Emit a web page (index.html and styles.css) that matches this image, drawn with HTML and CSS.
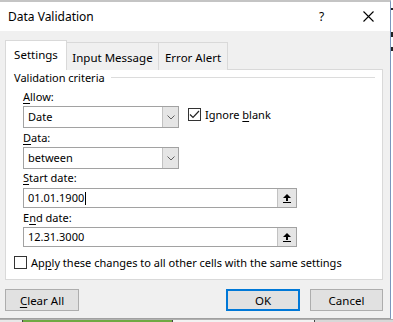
FILE: index.html
```html
<!DOCTYPE html>
<html>
<head>
	<meta charset="utf-8">
	<title>Data Validation</title>
	<link rel="stylesheet" href="styles.css">
</head>
<body>
<div class="screen">
  <div class="dialog">
    <div class="titlebar">
      <span class="title">Data Validation</span>
      <span class="help">?</span>
      <span class="close">
        <svg width="11" height="11" viewBox="0 0 11 11"><path d="M0.5 0.5 L10.5 10.5 M10.5 0.5 L0.5 10.5" stroke="#000" stroke-width="1.1" fill="none"/></svg>
      </span>
    </div>

    <div class="content">
      <div class="tabs">
        <div class="tab tab-active">Settings</div>
        <div class="tab tab-input">Input Message</div>
        <div class="tab tab-error">Error Alert</div>
      </div>

      <div class="panel">
        <div class="group-head"><span>Validation criteria</span><span class="rule"></span></div>

        <div class="fields">
          <div class="label label-allow"><u>A</u>llow:</div>
          <div class="row">
            <div class="combo"><span class="combo-text">Date</span><span class="drop"><svg width="8" height="5" viewBox="0 0 8 5"><path d="M0.5 0.5 L4 4 L7.5 0.5" stroke="#606060" fill="none"/></svg></span></div>
            <label class="check check-blank"><span class="box"><svg width="11" height="9" viewBox="0 0 11 9"><path d="M1 4.5 L4 7.5 L10 1" stroke="#222" stroke-width="1.2" fill="none"/></svg></span><span>Ignore <u>b</u>lank</span></label>
          </div>

          <div class="label label-data"><u>D</u>ata:</div>
          <div class="row">
            <div class="combo combo-data"><span class="combo-text">between</span><span class="drop"><svg width="8" height="5" viewBox="0 0 8 5"><path d="M0.5 0.5 L4 4 L7.5 0.5" stroke="#606060" fill="none"/></svg></span></div>
          </div>

          <div class="label label-start"><u>S</u>tart date:</div>
          <div class="ref">
            <span class="ref-text">01.01.1900<span class="caret"></span></span>
            <span class="ref-btn"><svg width="8" height="9" viewBox="0 0 8 9"><path d="M4 0 L8 4 L5 4 L5 7 L3 7 L3 4 L0 4 Z" fill="#000"/><rect x="0" y="8" width="8" height="1" fill="#000"/></svg></span>
          </div>

          <div class="label label-end">E<u>n</u>d date:</div>
          <div class="ref ref-end">
            <span class="ref-text">12.31.3000</span>
            <span class="ref-btn"><svg width="8" height="9" viewBox="0 0 8 9"><path d="M4 0 L8 4 L5 4 L5 7 L3 7 L3 4 L0 4 Z" fill="#000"/><rect x="0" y="8" width="8" height="1" fill="#000"/></svg></span>
          </div>
        </div>

        <label class="check check-apply"><span class="box"></span><span>Ap<u>p</u>ly these changes to all other cells with the same settings</span></label>
      </div>

      <div class="buttons">
        <button class="btn"><u>C</u>lear All</button>
        <span class="spacer"></span>
        <button class="btn btn-default">OK</button>
        <button class="btn btn-cancel">Cancel</button>
      </div>
    </div>
  </div>

  <div class="edge">
    <span class="mark mark-1"></span>
    <span class="mark mark-2"></span>
    <span class="mark mark-3"></span>
  </div>
</div>

<div class="sheet">
  <span class="cell cell-a"></span>
  <span class="cell cell-green"></span>
  <span class="cell cell-c"></span>
  <span class="cell cell-d"></span>
</div>
</body>
</html>
```

FILE: styles.css
```css
html, body{
  margin: 0;
}

body{
  width: 393px;
  height: 322px;
  overflow: hidden;
  background: #fff;
  font-family: "Noto Sans", "Open Sans", sans-serif;
  font-size: 11px;
  color: #000;
}

u{
  text-decoration: underline;
  text-underline-offset: 2px;
}

.screen{
  display: flex;
}

.dialog{
  width: 390px;
  height: 316px;
  border-top: 2px solid #c4c4c4;
  border-right: 1px solid #7b95bd;
  border-bottom: 1px solid #a0a0a0;
  background: #f0f0f0;
  display: flex;
  flex-direction: column;
}

/* title bar */
.titlebar{
  height: 29px;
  background: #fff;
  display: flex;
  align-items: center;
  padding-left: 8px;
}

.title{
  font-size: 12px;
  flex: 1;
}

.help{
  font-size: 12px;
  width: 8px;
  margin-right: 36px;
}

.close{
  display: flex;
  width: 11px;
  margin-right: 16px;
}

/* tabs */
.content{
  padding: 9px 7px 0 5px;
  display: flex;
  flex-direction: column;
}

.tabs{
  display: flex;
  align-items: flex-end;
  height: 30px;
  margin-bottom: -1px;
  position: relative;
}

.tab{
  box-sizing: border-box;
  height: 28px;
  border: 1px solid #d9d9d9;
  border-bottom: none;
  background: #f0f0f0;
  display: flex;
  align-items: center;
  justify-content: center;
  font-size: 11.5px;
}

.tab-active{
  width: 62px;
  height: 30px;
  background: #fff;
  padding-bottom: 3px;
  position: relative;
  z-index: 1;
}

.tab-input{
  width: 93px;
  margin-left: -1px;
  padding-top: 1px;
}

.tab-error{
  width: 70px;
  margin-left: -1px;
  padding-top: 1px;
}

.panel{
  height: 209px;
  border: 1px solid #d9d9d9;
  background: #fff;
  display: flex;
  flex-direction: column;
}

.group-head{
  height: 14px;
  display: flex;
  align-items: center;
  padding-left: 8px;
  padding-right: 7px;
}

.rule{
  flex: 1;
  height: 1px;
  background: #dcdcdc;
  margin-left: 6px;
}

.fields{
  padding-left: 17px;
  display: flex;
  flex-direction: column;
}

.label{
  height: 14px;
  line-height: 14px;
}

.label-allow{ margin-top: 6px; }
.label-data{ margin-top: 3px; }
.label-start{ margin-top: 2px; }
.label-end{ margin-top: 3px; }

.row{
  display: flex;
  align-items: flex-start;
  margin-top: 2px;
}

.combo{
  box-sizing: border-box;
  width: 156px;
  height: 22px;
  border: 1px solid #a2a2a2;
  display: flex;
  background: #fff;
}

.combo-text{
  flex: 1;
  padding-left: 4px;
  line-height: 20px;
}

.drop{
  width: 15px;
  background: #e5e5e5;
  border-left: 1px solid #c2c2c2;
  display: flex;
  align-items: center;
  justify-content: center;
}

.check{
  display: flex;
  align-items: center;
}

.box{
  box-sizing: border-box;
  width: 13px;
  height: 13px;
  border: 1px solid #333;
  background: #fff;
  display: flex;
  align-items: center;
  justify-content: center;
  margin-right: 4px;
}

.check-blank{
  margin-left: 9px;
  margin-top: 2px;
  height: 13px;
}

.ref{
  box-sizing: border-box;
  width: 274px;
  height: 20px;
  margin-top: 3px;
  border: 1px solid #a2a2a2;
  display: flex;
}

.ref-end{
  margin-top: 2px;
}

.ref-text{
  flex: 1;
  padding-left: 4px;
  line-height: 18px;
  display: flex;
  align-items: center;
}

.caret{
  width: 1px;
  height: 13px;
  background: #000;
  margin-left: 1px;
}

.ref-btn{
  width: 18px;
  background: #e5e5e5;
  border-left: 1px solid #c2c2c2;
  display: flex;
  align-items: center;
  justify-content: center;
}

.check-apply{
  margin-top: 9px;
  margin-left: 8px;
  height: 13px;
}

/* bottom buttons */
.buttons{
  display: flex;
  margin-top: 9px;
  gap: 10px;
}

.spacer{
  flex: 1;
}

.btn{
  box-sizing: border-box;
  width: 74px;
  height: 22px;
  border: 1px solid #adadad;
  background: #e1e1e1;
  font-family: "Noto Sans", "Open Sans", sans-serif;
  font-size: 11.5px;
  color: #000;
  padding: 0;
}

.btn-default{
  border: 2px solid #0078d7;
}

.btn-cancel{
  width: 73px;
}

/* spreadsheet behind the dialog */
.edge{
  width: 2px;
  display: flex;
  flex-direction: column;
}

.mark{
  height: 2px;
  background: #222;
}

.mark-1{ margin-top: 8px; }
.mark-2{ margin-top: 22px; height: 5px; }
.mark-3{ margin-top: 10px; height: 4px; }

.sheet{
  display: flex;
  height: 3px;
  border-top: 1px solid #b0b0b0;
}

.cell{
  height: 3px;
  border-right: 1px solid #444;
}

.cell-a{ width: 22px; background: #e8e8e8; }
.cell-green{ width: 149px; background: #6fa943; }
.cell-c{ width: 141px; background: #f2f2f2; }
.cell-d{ flex: 1; background: #d8d8d8; border-right: none; }
```
